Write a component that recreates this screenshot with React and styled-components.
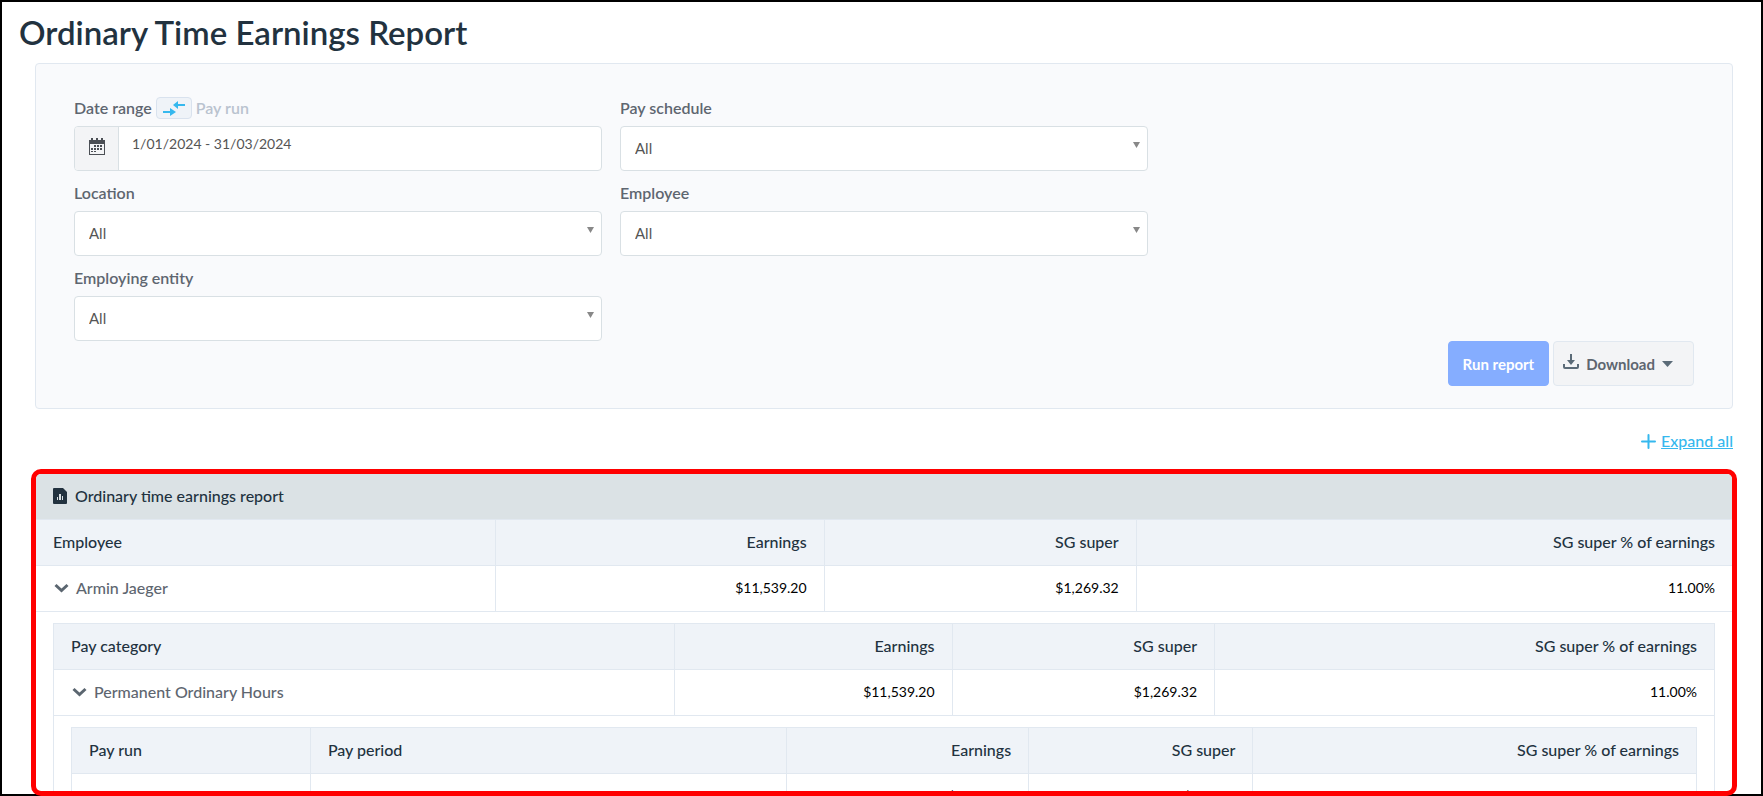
import React from "react";
import styled, { createGlobalStyle } from "styled-components";

const GlobalStyle = createGlobalStyle`
  *, *::before, *::after { box-sizing: border-box; }
  body { margin: 0; background: #fff; }
  body, input, select, button { font-family: Lato, "Open Sans", sans-serif; }
`;

const line = "#e1e8f0";
const inputLine = "#d9e0e4";
const ink = "#22323f";
const muted = "#5e6670";
const link = "#35b8ee";

const Page = styled.main`
  display: flex;
  flex-direction: column;
  height: 100vh;
  border: 2px solid #000;
  font-size: 16px;
  line-height: 22px;
  color: ${ink};
`;

const PageTitle = styled.h1`
  margin: 0;
  padding: 10px 17px;
  font-size: 33px;
  line-height: 41px;
  font-weight: 600;
`;

const FilterPanel = styled.form`
  margin: 0 28px 0 33px;
  padding: 33px 38px 22px;
  border: 1px solid ${line};
  border-radius: 4px;
  background: #f9fafc;
`;

const Filters = styled.div`
  display: grid;
  grid-template-columns: repeat(3, 1fr);
  gap: 11px 18px;
`;

const Field = styled.div`
  grid-column: ${(p) => p.$column};
`;

const LabelRow = styled.div`
  display: flex;
  align-items: center;
  gap: 4px;
  height: 22px;
  margin-bottom: 7px;
  font-weight: 600;
  color: ${muted};
`;

const OffMode = styled.span`
  color: #b9c3cf;
`;

const ModeToggle = styled.button`
  display: flex;
  align-items: center;
  justify-content: center;
  width: 36px;
  height: 22px;
  padding: 0;
  border: 1px solid #d9e2ee;
  border-radius: 4px;
  background: #eff3f8;
`;

const DateGroup = styled.div`
  display: flex;
  height: 45px;
  border: 1px solid ${inputLine};
  border-radius: 4px;
  background: #fff;
  overflow: hidden;
`;

const DateAddon = styled.span`
  display: flex;
  flex: 0 0 44px;
  align-items: center;
  justify-content: center;
  padding-bottom: 4px;
  border-right: 1px solid ${inputLine};
  background: #f3f4f6;
`;

const DateInput = styled.input`
  flex: 1;
  min-width: 0;
  padding: 0 13px 11px;
  border: 0;
  background: transparent;
  font-size: 14px;
  color: #555;
`;

const SelectBox = styled.div`
  position: relative;
`;

const SelectInput = styled.select`
  display: block;
  width: 100%;
  height: 45px;
  padding: 0 14px 2px;
  border: 1px solid ${inputLine};
  border-radius: 4px;
  background: #fff;
  appearance: none;
  font-size: 15px;
  color: #555;
`;

const SelectArrow = styled.svg`
  position: absolute;
  top: 16px;
  right: 8px;
  pointer-events: none;
`;

const Actions = styled.div`
  display: flex;
  justify-content: flex-end;
  gap: 4px;
`;

const Button = styled.button`
  display: flex;
  align-items: center;
  gap: 7px;
  height: 45px;
  padding: ${(p) => (p.$primary ? "0 14px" : "0 20px 0 9px")};
  border: 1px solid ${(p) => (p.$primary ? "#85adff" : line)};
  border-radius: 4px;
  background: ${(p) => (p.$primary ? "#85adff" : "#f3f4f6")};
  color: ${(p) => (p.$primary ? "#fff" : muted)};
  font-size: 15px;
  font-weight: 700;
`;

const ExpandRow = styled.div`
  display: flex;
  flex: 0 0 60px;
  align-items: center;
  justify-content: flex-end;
  gap: 5px;
  padding: 4px 28px 0;
`;

const ExpandLink = styled.a`
  color: ${link};
  font-weight: 500;
  text-decoration: underline;
`;

const ReportFrame = styled.section`
  flex: 1;
  min-height: 0;
  margin: 0 24px -2px 29px;
  border: 5px solid #f00;
  border-radius: 10px;
  background: #fff;
  overflow: hidden;
`;

const ReportTitle = styled.h2`
  display: flex;
  align-items: center;
  gap: 8px;
  height: 46px;
  margin: 0;
  padding: 0 17px 2px;
  border-bottom: 1px solid ${line};
  background: #dbe2e5;
  font-size: 16px;
  font-weight: 500;
`;

const Table = styled.table`
  width: 100%;
  table-layout: fixed;
  border-collapse: separate;
  border-spacing: 0;
  border: 0 solid ${line};
  border-width: ${(p) => (p.$nested ? "1px 0 0 1px" : "0")};

  > * > tr > :last-child {
    border-right-width: ${(p) => (p.$nested ? "1px" : "0")};
  }
`;

const HeadCell = styled.th`
  height: 46px;
  padding: 0 17px 2px;
  border: 0 solid ${line};
  border-width: 0 1px 1px 0;
  background: #eff3f8;
  font-weight: 500;
  text-align: ${(p) => (p.$numeric ? "right" : "left")};
`;

const Cell = styled.td`
  height: 46px;
  padding: 0 17px 2px;
  border: 0 solid ${line};
  border-width: 0 1px 1px 0;
  color: ${(p) => (p.$numeric ? "#000" : muted)};
  font-size: 14px;
  font-weight: 400;
  text-align: ${(p) => (p.$numeric ? "right" : "left")};
`;

const DetailCell = styled.td`
  padding: 11px 17px;
  border: 0 solid ${line};
  border-right-width: 1px;
`;

const RowToggle = styled.button`
  display: flex;
  align-items: center;
  gap: 7px;
  padding: 0 0 0 1px;
  border: 0;
  background: none;
  color: inherit;
  font-size: 16px;
  font-weight: 500;
`;

const SwapIcon = () => (
  <svg width="22" height="15" viewBox="0 0 22 15" fill={link} aria-hidden="true">
    <path d="M0 10h7V7l6 4-6 4v-3H0z" />
    <path d="M22 3h-7V0L10 4l5 4V5h7z" />
  </svg>
);

const CalendarIcon = () => (
  <svg width="16" height="17" viewBox="0 0 16 17" aria-hidden="true">
    <path
      fill="#4b4f55"
      fillRule="evenodd"
      d="M0 2h2V0h2v2h3V0h2v2h3V0h2v2h2v15H0zM1 6v10h14V6z"
    />
    <path
      fill="#4b4f55"
      d="M5 7h2v2H5zM8 7h2v2H8zM11 7h2v2h-2zM2 10h2v2H2zM5 10h2v2H5zM8 10h2v2H8zM11 10h2v2h-2zM2 13h2v1H2zM5 13h2v1H5z"
    />
  </svg>
);

const DownloadIcon = () => (
  <svg width="16" height="22" viewBox="0 0 16 22" aria-hidden="true">
    <path fill="#5b6b78" d="M7 1h2v6h3l-4 5-4-5h3z" />
    <path
      fill="none"
      stroke="#5b6b78"
      strokeWidth="2"
      d="M1 11v3q0 1 1 1h12q1 0 1-1v-3"
    />
  </svg>
);

const CaretIcon = () => (
  <svg width="11" height="6" viewBox="0 0 11 6" aria-hidden="true">
    <path fill="#5b6b78" d="M0 0h11L5.500 6z" />
  </svg>
);

const PlusIcon = () => (
  <svg width="15" height="15" viewBox="0 0 15 15" aria-hidden="true">
    <path
      fill="none"
      stroke={link}
      strokeWidth="2"
      strokeLinecap="round"
      d="M7.500 1v13M1 7.500h13"
    />
  </svg>
);

const ReportIcon = () => (
  <svg width="14" height="16" viewBox="0 0 14 16" aria-hidden="true">
    <path fill={ink} d="M1 0h9l4 4v11q0 1-1 1H1q-1 0-1-1V1q0-1 1-1z" />
    <path fill="#dbe2e5" d="M4 9h1v3H4zM6 6h2v6H6zM9 8h1v4H9z" />
  </svg>
);

const ChevronIcon = () => (
  <svg width="15" height="10" viewBox="0 0 15 10" aria-hidden="true">
    <path fill="none" stroke="#5b6670" strokeWidth="3" d="M1.500 2l6 5.500 6-5.500" />
  </svg>
);

function SelectField({ id, label, column }) {
  return (
    <Field $column={column}>
      <LabelRow>
        <label htmlFor={id}>{label}</label>
      </LabelRow>
      <SelectBox>
        <SelectInput id={id} defaultValue="all">
          <option value="all">All</option>
        </SelectInput>
        <SelectArrow width="7" height="6" viewBox="0 0 7 6" aria-hidden="true">
          <path fill="#888" d="M0 0h7L3.500 6z" />
        </SelectArrow>
      </SelectBox>
    </Field>
  );
}

function ReportTable({ nested, widths, textColumns = 1, headings, rows, detail }) {
  return (
    <Table $nested={nested}>
      <colgroup>
        {widths.map((width, i) => (
          <col key={i} width={width} />
        ))}
      </colgroup>
      <thead>
        <tr>
          {headings.map((heading, i) => (
            <HeadCell key={heading} scope="col" $numeric={i >= textColumns}>
              {heading}
            </HeadCell>
          ))}
        </tr>
      </thead>
      <tbody>
        {rows.map((row) => (
          <tr key={row[0]}>
            {row.map((value, i) => (
              <Cell key={i} $numeric={i >= textColumns}>
                {detail && i === 0 ? (
                  <RowToggle type="button" aria-expanded="true">
                    <ChevronIcon />
                    {value}
                  </RowToggle>
                ) : (
                  value
                )}
              </Cell>
            ))}
          </tr>
        ))}
        {detail && (
          <tr>
            <DetailCell colSpan={headings.length}>{detail}</DetailCell>
          </tr>
        )}
      </tbody>
    </Table>
  );
}

const amounts = ["Earnings", "SG super", "SG super % of earnings"];

export default function App() {
  return (
    <>
      <GlobalStyle />
      <Page>
        <PageTitle>Ordinary Time Earnings Report</PageTitle>
        <FilterPanel onSubmit={(e) => e.preventDefault()}>
          <Filters>
            <Field $column="1">
              <LabelRow>
                <label htmlFor="range">Date range</label>
                <ModeToggle type="button" aria-label="Switch to pay run">
                  <SwapIcon />
                </ModeToggle>
                <OffMode>Pay run</OffMode>
              </LabelRow>
              <DateGroup>
                <DateAddon>
                  <CalendarIcon />
                </DateAddon>
                <DateInput id="range" type="text" defaultValue="1/01/2024 - 31/03/2024" />
              </DateGroup>
            </Field>
            <SelectField id="schedule" label="Pay schedule" column="2" />
            <SelectField id="location" label="Location" column="1" />
            <SelectField id="employee" label="Employee" column="2" />
            <SelectField id="entity" label="Employing entity" column="1" />
          </Filters>
          <Actions>
            <Button type="submit" $primary>
              Run report
            </Button>
            <Button type="button" aria-haspopup="true">
              <DownloadIcon />
              Download
              <CaretIcon />
            </Button>
          </Actions>
        </FilterPanel>
        <ExpandRow>
          <PlusIcon />
          <ExpandLink href="#report">Expand all</ExpandLink>
        </ExpandRow>
        <ReportFrame id="report">
          <ReportTitle>
            <ReportIcon />
            Ordinary time earnings report
          </ReportTitle>
          <ReportTable
            widths={["27.1%", "19.4%", "18.4%", "35.1%"]}
            headings={["Employee", ...amounts]}
            rows={[["Armin Jaeger", "$11,539.20", "$1,269.32", "11.00%"]]}
            detail={
              <ReportTable
                nested
                widths={["37.4%", "16.7%", "15.8%", "30.1%"]}
                headings={["Pay category", ...amounts]}
                rows={[["Permanent Ordinary Hours", "$11,539.20", "$1,269.32", "11.00%"]]}
                detail={
                  <ReportTable
                    nested
                    textColumns={2}
                    widths={["14.7%", "29.3%", "14.9%", "13.8%", "27.3%"]}
                    headings={["Pay run", "Pay period", ...amounts]}
                    rows={[["12/03/2024", "01/03/2024 - 11/03/2024", "$5,769.60", "$634.66", "11.00%"]]}
                  />
                }
              />
            }
          />
        </ReportFrame>
      </Page>
    </>
  );
}
